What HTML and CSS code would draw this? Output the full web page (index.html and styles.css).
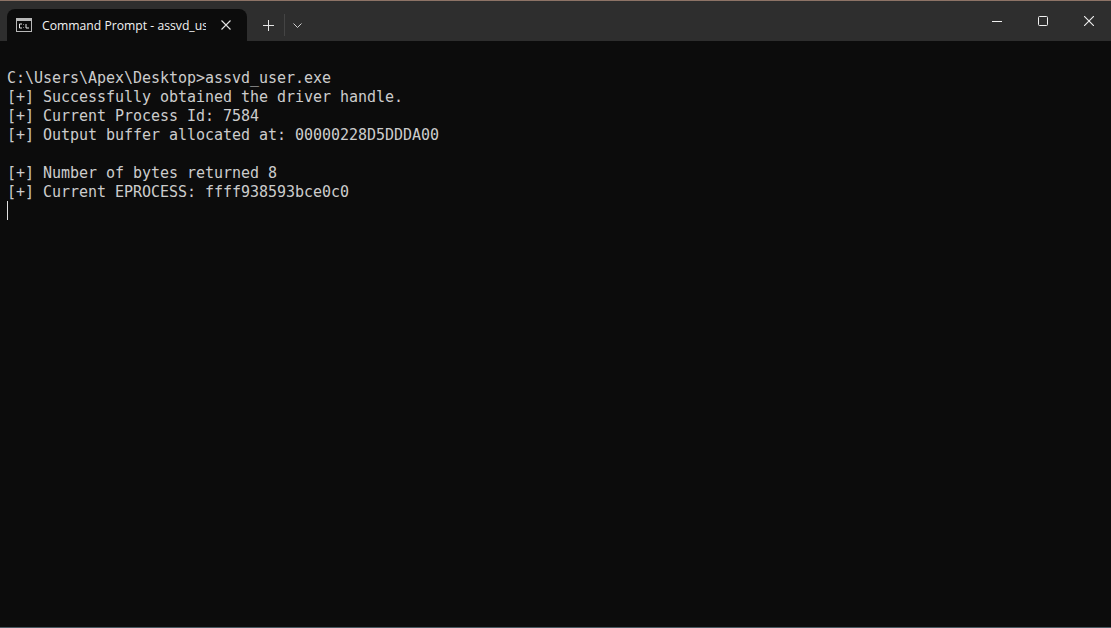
FILE: index.html
```html
<!DOCTYPE html>
<html lang="en">
<head>
<meta charset="utf-8">
<title>Command Prompt - assvd_user.exe</title>
<link rel="stylesheet" href="styles.css">
</head>
<body>
<div class="window">
  <header class="titlebar">
    <div class="tab">
      <svg class="tab-icon" width="16" height="14" viewBox="0 0 16 14">
        <rect x="0.5" y="0.5" width="15" height="13" fill="#0c0c0c" stroke="#b8b8b8"/>
        <rect x="1" y="1" width="14" height="2" fill="#b8b8b8"/>
        <path d="M6 6H3.5V10H6M7.5 6.5v.5M7.5 9.5v.5M10 6v4H13" fill="none" stroke="#e8e8e8" stroke-width="1"/>
      </svg>
      <span class="tab-title">Command Prompt - assvd_user.exe</span>
      <svg class="tab-close" width="10" height="10" viewBox="0 0 10 10">
        <path d="M.5.5l9 9M9.5.5l-9 9" stroke="#e4e4e4" stroke-width="1.1" fill="none"/>
      </svg>
    </div>
    <div class="tab-actions">
      <svg class="plus" width="11" height="11" viewBox="0 0 11 11">
        <path d="M5.5 0v11M0 5.5h11" stroke="#e4e4e4" stroke-width="1" fill="none"/>
      </svg>
      <span class="divider"></span>
      <svg class="chevron" width="9" height="5" viewBox="0 0 9 5">
        <path d="M.5.5L4.5 4.5 8.5.5" stroke="#d0d0d0" stroke-width="1" fill="none"/>
      </svg>
    </div>
    <div class="caption">
      <span class="cap-btn"><svg width="10" height="1" viewBox="0 0 10 1"><path d="M0 .5h10" stroke="#f0f0f0" fill="none"/></svg></span>
      <span class="cap-btn"><svg width="10" height="10" viewBox="0 0 10 10"><rect x=".5" y=".5" width="9" height="9" rx="1" stroke="#f0f0f0" fill="none"/></svg></span>
      <span class="cap-btn"><svg width="10" height="10" viewBox="0 0 10 10"><path d="M0 0l10 10M10 0L0 10" stroke="#f0f0f0" stroke-width="1.1" fill="none"/></svg></span>
    </div>
  </header>
  <main class="terminal">
<pre class="output">
C:\Users\Apex\Desktop&gt;assvd_user.exe
[+] Successfully obtained the driver handle.
[+] Current Process Id: 7584
[+] Output buffer allocated at: 00000228D5DDDA00

[+] Number of bytes returned 8
[+] Current EPROCESS: ffff938593bce0c0
<span class="cursor"></span></pre>
  </main>
  <div class="edge"></div>
</div>
</body>
</html>
```
FILE: styles.css
```css
* { box-sizing: border-box; }
html, body { margin: 0; height: 100%; overflow: hidden; background: #0c0c0c; }
.window { height: 628px; display: flex; flex-direction: column; border-top: 1px solid #8d7366; }
.titlebar { height: 40px; flex: none; display: flex; align-items: flex-end; background: #2e2e2e; padding-left: 7px; }
.tab { width: 240px; height: 32px; display: flex; align-items: center; background: #0c0c0c; border-radius: 8px 8px 0 0; padding-left: 9px; font: 12.2px "Open Sans", "Noto Sans", sans-serif; color: #f2f2f2; }
.tab-icon { flex: none; margin-right: 10px; }
.tab-title { width: 164px; overflow: hidden; white-space: nowrap; flex: none; }
.tab-close { flex: none; margin-left: 15px; }
.tab-actions { height: 32px; display: flex; align-items: center; padding-left: 16px; }
.plus { flex: none; }
.divider { width: 1px; height: 22px; background: #444; margin: 0 8px 0 10px; }
.chevron { flex: none; }
.caption { margin-left: auto; margin-right: -1px; align-self: stretch; display: flex; }
.cap-btn { width: 46px; height: 40px; display: flex; align-items: center; justify-content: center; }
.terminal { flex: 1; padding: 28px 0 0 7px; background: #0c0c0c; }
.output { margin: 0; font: 15px/19px "DejaVu Sans Mono", monospace; letter-spacing: -0.03px; color: #cccccc; }
.cursor { display: inline-block; width: 1px; height: 19px; background: #e0e0e0; vertical-align: top; transform: translateY(-1px); }
.edge { height: 1px; flex: none; background: #4a5a62; }
```
